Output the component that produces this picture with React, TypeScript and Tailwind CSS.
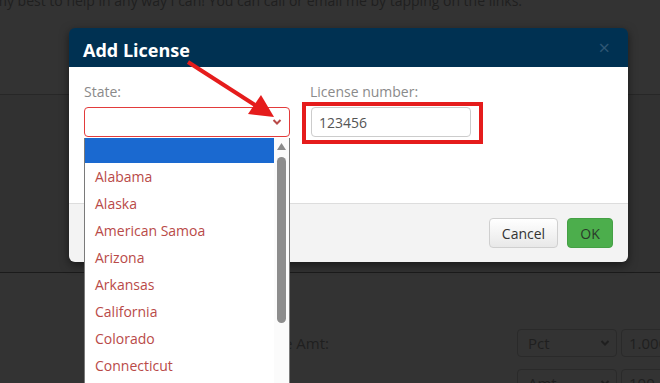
import React from "react";

const states = [
  "Alabama",
  "Alaska",
  "American Samoa",
  "Arizona",
  "Arkansas",
  "California",
  "Colorado",
  "Connecticut",
];

function Chevron({ color }: { color: string }) {
  return (
    <svg width="10" height="8" viewBox="0 0 10 8">
      <path d="M1.5 2 L5 5.5 L8.5 2" fill="none" stroke={color} strokeWidth="2" />
    </svg>
  );
}

export default function App() {
  return (
    <div className="relative w-[660px] h-[383px] overflow-hidden bg-[#333333] font-['Open_Sans',sans-serif]">
      {/* background page (dimmed) */}
      <div className="flex h-[95px] flex-col border-b border-[#272727]">
        <p className="-mt-[9px] -ml-[6px] whitespace-nowrap text-[14px] leading-[20px] text-[#1f1f1f]">
          my best to help in any way I can! You can call or email me by tapping on the links.
        </p>
      </div>
      <div className="h-[178px] border-b border-[#1b1b1b] bg-[#313131]" />
      <div className="flex flex-col gap-[12px] pt-[56px]">
        <div className="flex h-[28px] items-start">
          <div className="w-[329px] shrink-0 pt-[4px] text-right text-[15px] leading-[20px] text-[#1f1f1f] whitespace-nowrap">
            Minimum Charge Amt:
          </div>
          <div className="ml-[188px] flex h-[28px] w-[100px] shrink-0 items-center justify-between rounded-[4px] border border-[#2a2a2a] pl-[10px] pr-[6px] text-[15px] text-[#1f1f1f]">
            <span>Pct</span>
            <Chevron color="#1f1f1f" />
          </div>
          <div className="ml-[4px] flex h-[28px] w-[60px] shrink-0 items-center rounded-[4px] border border-[#2a2a2a] pl-[7px] text-[15px] text-[#1f1f1f]">
            1.000
          </div>
        </div>
        <div className="flex h-[28px] items-start">
          <div className="w-[329px] shrink-0 pt-[8px] text-right text-[15px] leading-[20px] text-[#1f1f1f] whitespace-nowrap">
            Maximum Charge Amt:
          </div>
          <div className="ml-[188px] flex h-[28px] w-[100px] shrink-0 items-center justify-between rounded-[4px] border border-[#2a2a2a] pl-[10px] pr-[6px] text-[15px] text-[#1f1f1f]">
            <span>Amt</span>
            <Chevron color="#1f1f1f" />
          </div>
          <div className="ml-[4px] flex h-[28px] w-[60px] shrink-0 items-center rounded-[4px] border border-[#2a2a2a] pl-[7px] text-[15px] text-[#1f1f1f]">
            100
          </div>
        </div>
      </div>

      {/* modal */}
      <div className="absolute left-[69px] top-[28px] w-[559px] overflow-hidden rounded-[6px] shadow-[0_3px_10px_rgba(0,0,0,0.5)]">
        <div className="flex h-[39px] items-center justify-between bg-[#003152] pl-[14px] pr-[18px]">
          <span className="pt-[4px] text-[18px] font-bold leading-none text-white">Add License</span>
          <span className="text-[20px] leading-none text-[#2e5674]">×</span>
        </div>
        <div className="flex h-[136px] gap-[20px] bg-white px-[15px] pt-[15px]">
          <div className="flex flex-col">
            <label className="text-[14px] leading-[20px] text-[#8a8a8a]">State:</label>
            <div className="mt-[5px] flex h-[30px] w-[206px] items-center justify-end rounded-[4px] border border-[#e23b3b] pr-[7px]">
              <Chevron color="#b94a48" />
            </div>
          </div>
          <div className="flex flex-col">
            <label className="text-[14px] leading-[20px] text-[#8a8a8a]">License number:</label>
            <div className="ml-[1px] mt-[5px] flex h-[30px] w-[160px] items-center rounded-[4px] border border-[#cccccc] pl-[7px] text-[14px] text-[#555555]">
              123456
            </div>
          </div>
        </div>
        <div className="flex h-[59px] items-center justify-end gap-[9px] border-t border-[#dddddd] bg-[#f3f3f3] pr-[15px]">
          <button className="h-[30px] w-[69px] rounded-[4px] border border-[#cfcfcf] bg-gradient-to-b from-[#ffffff] to-[#e8e8e8] text-[14px] text-[#333333]">
            Cancel
          </button>
          <button className="h-[30px] w-[46px] rounded-[4px] border border-[#45a045] bg-[#4cae4c] text-[14px] text-[#2a3a2a]">
            OK
          </button>
        </div>
      </div>

      {/* open dropdown list */}
      <div className="absolute left-[84px] top-[138px] flex h-[260px] w-[206px] overflow-hidden border-x border-[#7a7a7a] bg-white">
        <div className="flex-1">
          <div className="h-[25px] bg-[#1a69d0]" />
          {states.map((s) => (
            <div key={s} className="flex h-[27px] items-center pl-[10px] text-[14px] text-[#b94a48]">
              {s}
            </div>
          ))}
        </div>
        <div className="flex w-[15px] flex-col items-center bg-[#fbfbfb] pt-[5px]">
          <svg width="9" height="7" viewBox="0 0 9 7">
            <path d="M0 7 L4.5 0 L9 7 Z" fill="#8a8a8a" />
          </svg>
          <div className="mt-[7px] h-[166px] w-[9px] rounded-full bg-[#8d8d8d]" />
        </div>
      </div>

      {/* annotations */}
      <div className="absolute left-[302px] top-[102px] h-[42px] w-[181px] border-[4px] border-[#e51c1c]" />
      <svg className="absolute left-0 top-0" width="660" height="383" viewBox="0 0 660 383">
        <line x1="188" y1="62" x2="255" y2="105" stroke="#e51c1c" strokeWidth="4" />
        <polygon points="274,117 248,114 261,95" fill="#e51c1c" />
      </svg>
    </div>
  );
}
